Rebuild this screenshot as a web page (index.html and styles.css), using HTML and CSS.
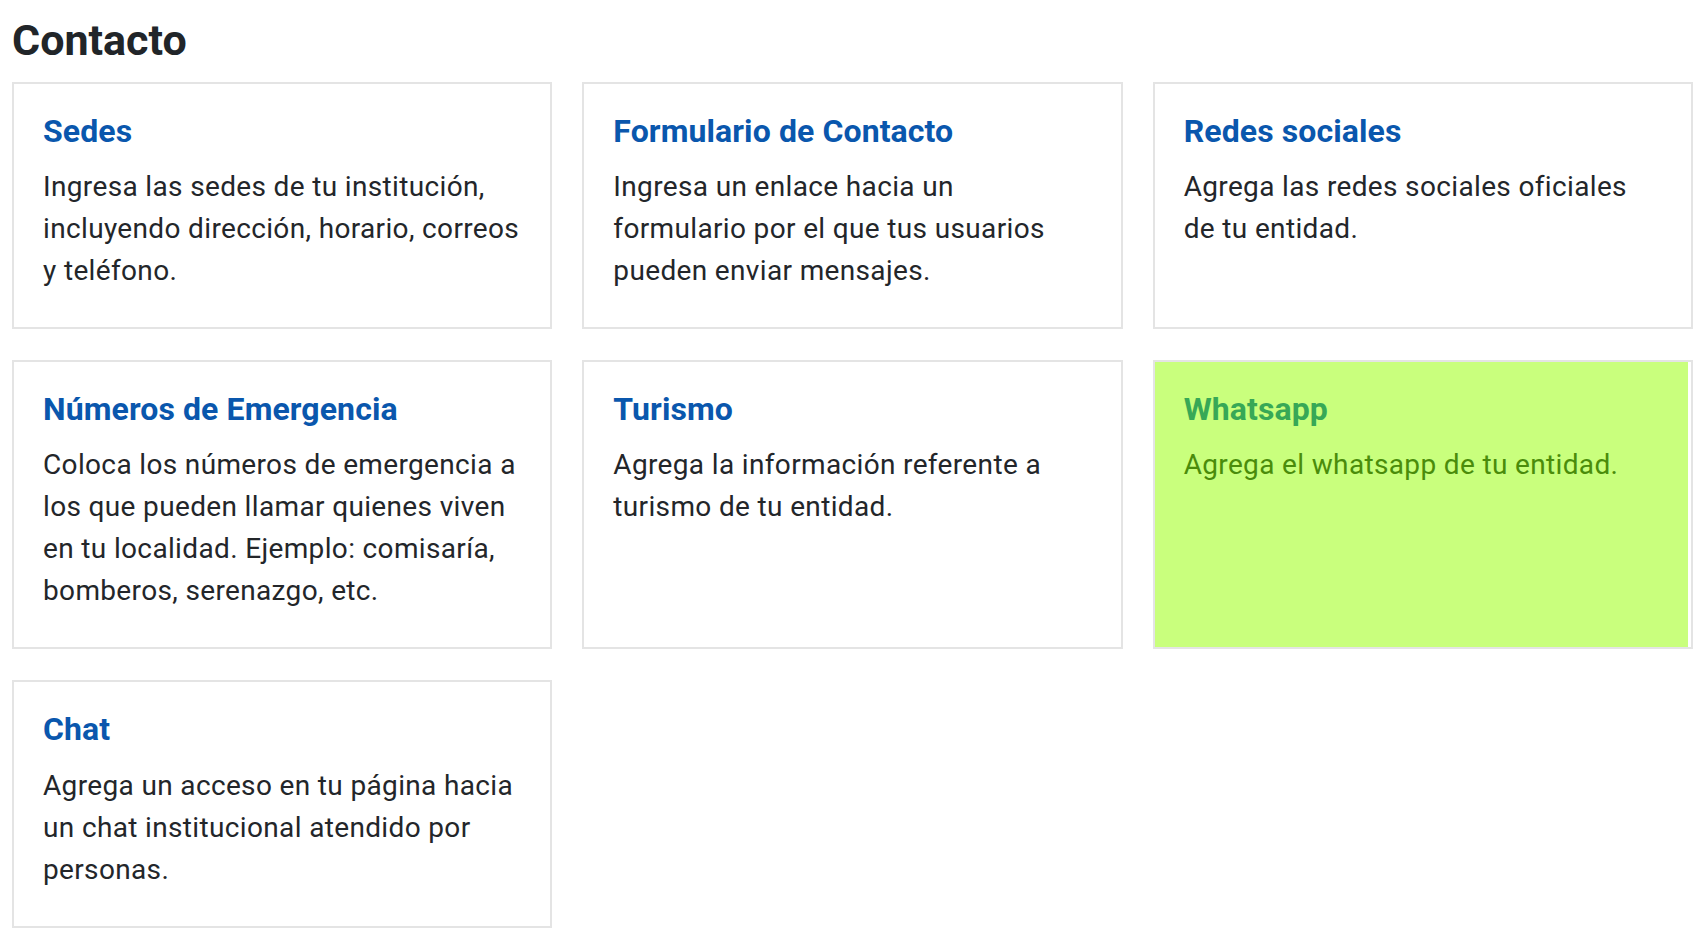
FILE: index.html
```html
<!DOCTYPE html>
<html lang="es">
<head>
    <meta charset="UTF-8">
    <meta name="viewport" content="width=device-width, initial-scale=1.0">
    <title>Contacto</title>
    <link rel="stylesheet" href="styles.css">
</head>
<body>

    <!-- Section title -->
    <h1>Contacto</h1>

    <div class="cards">
        <div class="card">
            <h2>Sedes</h2>
            <p>Ingresa las sedes de tu institución, incluyendo dirección, horario, correos y teléfono.</p>
        </div>

        <div class="card">
            <h2>Formulario de Contacto</h2>
            <p>Ingresa un enlace hacia un formulario por el que tus usuarios pueden enviar mensajes.</p>
        </div>

        <div class="card">
            <h2>Redes sociales</h2>
            <p>Agrega las redes sociales oficiales de tu entidad.</p>
        </div>

        <div class="card">
            <h2>Números de Emergencia</h2>
            <p>Coloca los números de emergencia a los que pueden llamar quienes viven en tu localidad. Ejemplo: comisaría, bomberos, serenazgo, etc.</p>
        </div>

        <div class="card">
            <h2>Turismo</h2>
            <p>Agrega la información referente a turismo de tu entidad.</p>
        </div>

        <div class="card card-whatsapp">
            <h2>Whatsapp</h2>
            <p>Agrega el whatsapp de tu entidad.</p>
        </div>

        <div class="card">
            <h2>Chat</h2>
            <p>Agrega un acceso en tu página hacia un chat institucional atendido por personas.</p>
        </div>
    </div>

</body>
</html>
```

FILE: styles.css
```css
body {
    margin: 0;
    padding: 15px 13px 0 12px;
    font-family: Roboto, "Liberation Sans", Arial, sans-serif;
    background: #ffffff;
    color: #212529;
}

h1 {
    font-size: 43px;
    font-weight: 700;
    line-height: 1.2;
    margin: 0 0 15px;
    color: #212529;
}

/* Grid of contact cards */
.cards {
    display: grid;
    grid-template-columns: repeat(3, 1fr);
    gap: 31px 30px;
}

.card {
    border: 2px solid #e4e4e4;
    padding: 28px 29px 35px;
    background: #ffffff;
}

.card h2 {
    font-size: 32px;
    font-weight: 700;
    line-height: 1.2;
    letter-spacing: 0.1px;
    margin: 0 0 16px;
    color: #0a57ad;
}

.card p {
    font-size: 28px;
    line-height: 42px;
    letter-spacing: 0.35px;
    margin: 0;
    color: #23262a;
}

/* Highlighted card */
.card-whatsapp {
    background: #c9ff7d;
    box-shadow: inset -3px 0 0 #ffffff;
}

.card-whatsapp h2 {
    color: #37a856;
}

.card-whatsapp p {
    color: #4a8c0b;
}
```
